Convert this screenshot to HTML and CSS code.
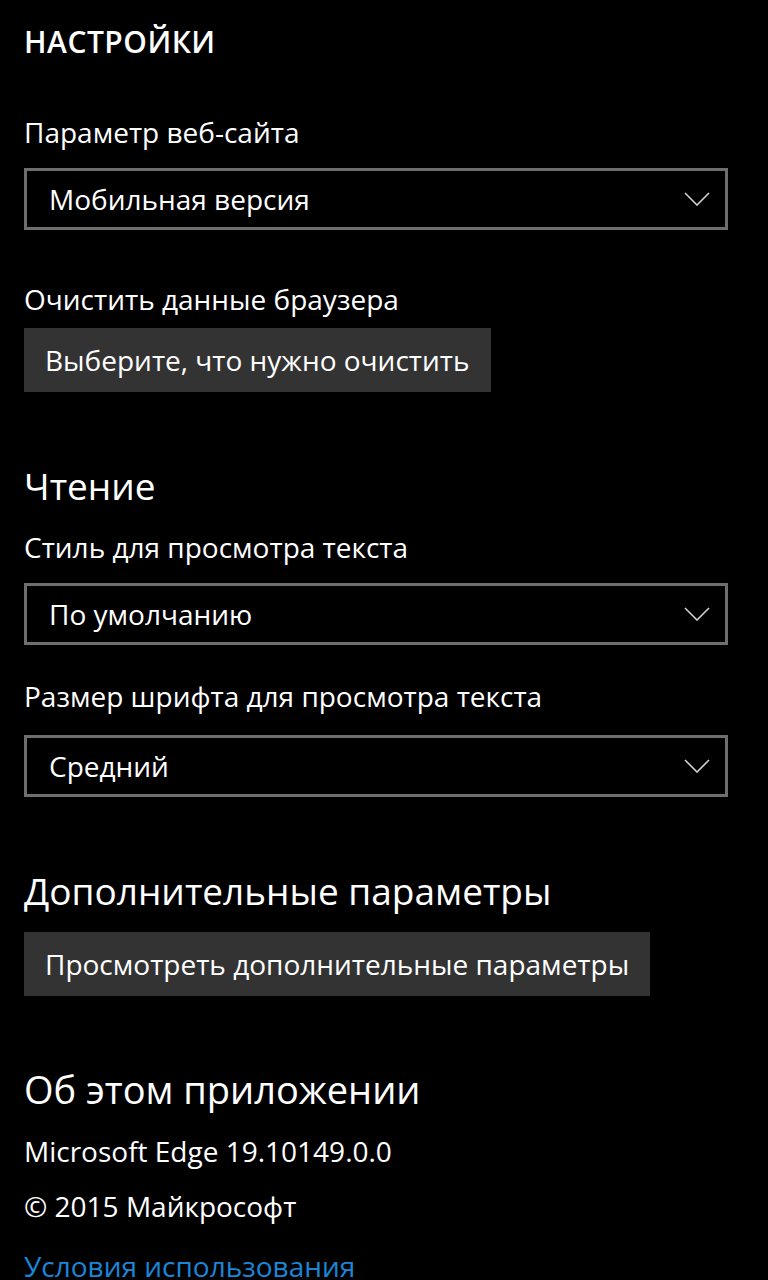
FILE: index.html
```html
<!DOCTYPE html>
<html lang="ru">
<head>
    <meta charset="UTF-8">
    <meta name="viewport" content="width=device-width, initial-scale=1.0">
    <title>Настройки</title>
    <link rel="stylesheet" href="styles.css">
</head>
<body>

    <div class="settings">
        <h1 class="page-title">НАСТРОЙКИ</h1>

        <div class="label first">Параметр веб-сайта</div>
        <div class="dropdown">
            <span>Мобильная версия</span>
            <svg class="chevron" width="26" height="14" viewBox="0 0 26 14"><path d="M1 1 L13 13 L25 1" fill="none" stroke="#d0d0d0" stroke-width="1.6"/></svg>
        </div>

        <div class="label spaced">Очистить данные браузера</div>
        <button class="action">Выберите, что нужно очистить</button>

        <h2 class="section reading">Чтение</h2>
        <div class="label">Стиль для просмотра текста</div>
        <div class="dropdown">
            <span>По умолчанию</span>
            <svg class="chevron" width="26" height="14" viewBox="0 0 26 14"><path d="M1 1 L13 13 L25 1" fill="none" stroke="#d0d0d0" stroke-width="1.6"/></svg>
        </div>

        <div class="label second">Размер шрифта для просмотра текста</div>
        <div class="dropdown">
            <span>Средний</span>
            <svg class="chevron" width="26" height="14" viewBox="0 0 26 14"><path d="M1 1 L13 13 L25 1" fill="none" stroke="#d0d0d0" stroke-width="1.6"/></svg>
        </div>

        <h2 class="section">Дополнительные параметры</h2>
        <button class="action">Просмотреть дополнительные параметры</button>

        <h2 class="section about">Об этом приложении</h2>
        <div class="info">Microsoft Edge 19.10149.0.0</div>
        <div class="info">© 2015 Майкрософт</div>
        <a class="link" href="#">Условия использования</a>
    </div>

</body>
</html>
```

FILE: styles.css
```css
body {
    margin: 0;
    background-color: #000;
    color: #fff;
    font-family: "Open Sans", "Noto Sans", sans-serif;
}
.settings {
    padding: 22px 40px 0 24px;
    display: flex;
    flex-direction: column;
    align-items: flex-start;
}
.page-title {
    margin: 0;
    font-size: 30px;
    font-weight: 600;
    line-height: 40px;
    letter-spacing: 0.5px;
}
.label {
    font-size: 28px;
    line-height: 36px;
    margin-top: 21px;
    margin-bottom: 18px;
}
.label.first {
    margin-top: 52px;
}
.label.spaced {
    margin-top: 51px;
    margin-bottom: 11px;
}
.label.second {
    margin-top: 33px;
    margin-bottom: 21px;
}
.dropdown {
    box-sizing: border-box;
    width: 704px;
    height: 62px;
    border: 3px solid #6e6e6e;
    padding: 0 15px 0 22px;
    display: flex;
    align-items: center;
    justify-content: space-between;
    font-size: 28px;
    line-height: 36px;
}
.chevron {
    display: block;
}
.action {
    height: 64px;
    padding: 0 21px;
    border: none;
    background-color: #333;
    color: #fff;
    font-family: inherit;
    font-size: 28px;
    line-height: 36px;
}
.section {
    margin: 72px 0 19px;
    font-size: 37px;
    font-weight: 400;
    line-height: 44px;
}
.section.reading {
    margin-bottom: 0;
}
.section.about {
    margin-top: 71px;
    margin-bottom: 22px;
    font-size: 38px;
}
.info {
    font-size: 28px;
    line-height: 36px;
    margin-bottom: 19px;
}
.link {
    margin-top: 5px;
    font-size: 28px;
    line-height: 36px;
    color: #1a86d8;
    text-decoration: none;
}
```
